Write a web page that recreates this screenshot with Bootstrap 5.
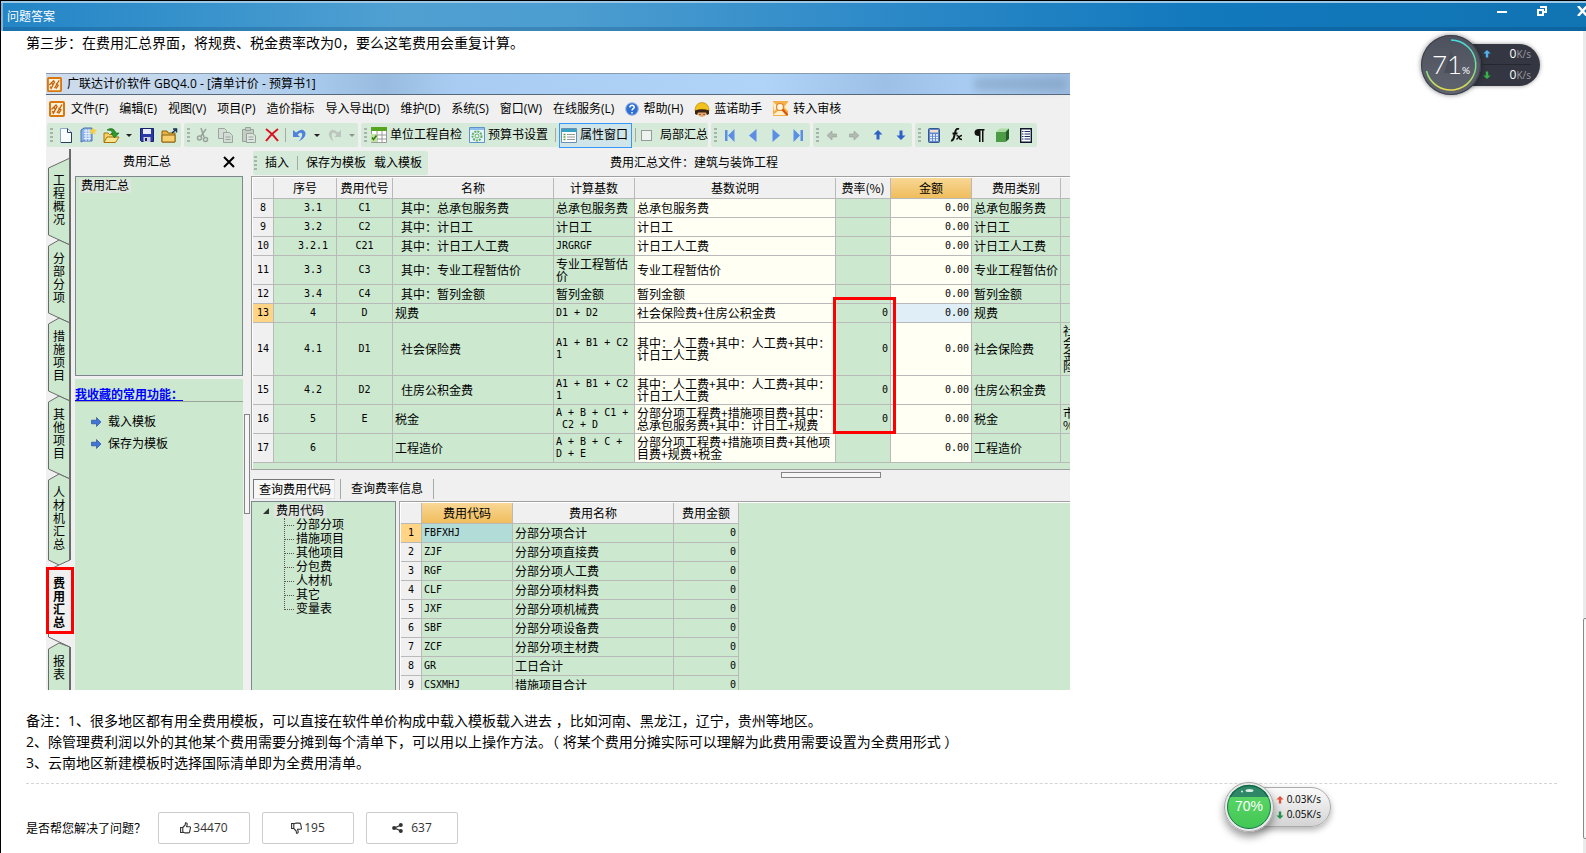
<!DOCTYPE html>
<html lang="zh-CN">
<head>
<meta charset="utf-8">
<meta name="viewport" content="width=device-width, initial-scale=1">
<title>问题答案</title>
<link href="https://cdn.jsdelivr.net/npm/bootstrap@5.3.0/dist/css/bootstrap.min.css" rel="stylesheet">
<style>
  :root { --ui: "Open Sans", "Noto Sans CJK SC", sans-serif; --grid: "DejaVu Sans Mono", "Noto Sans CJK SC", monospace; --green: #cce8cf; --face: #f0f0f0; --line: #b9b9b9; }
  body { font-family: var(--ui); font-size: 14px; line-height: 21px; color: #000; background: #fff; border-left: 1px solid #000; min-height: 100vh; overflow-x: hidden; }
  svg { display: block; flex: none; }
  .plain { border: 0; background: none; padding: 0; color: inherit; font: inherit; white-space: nowrap; }

  .winbar { height: 31px; border-top: 1px solid #000; background: linear-gradient(90deg, #2385c6 0, #3e96cd 16%, #50a0d2 25%, #4c9dd0 36%, #2e8ac8 55%, #1279bd 76%, #1174b3 100%); box-shadow: inset 0 2px 0 #9cc8e6, inset 2px 0 0 #7fb8de, inset 0 -4px 0 rgba(0,50,95,.22); color: #fff; font-size: 12px; padding-left: 6px; }
  .winbar h1 { font-size: 12px; line-height: 31px; font-weight: 400; }
  .winbtns { gap: 30px; margin-right: -2px; padding-top: 5px; }

  .doc { padding: 1px 29px 9px 25px; }
  .shot { max-width: 1024px; max-height: 617px; margin: 20px 0 20px 20px; background: var(--face); font-size: 12px; line-height: 12px; }
  .shot-title { height: 22px; border-bottom: 1px solid #56697c; border-top: 1px solid #8a9bad; background: linear-gradient(90deg, #cfdcec 0, #b9d3ee 20%, #a6c8ea 27%, #98bbdf 33%, #a9cdf2 40%, #b0d4f8 70%, #9dc1e6 82%, #a9cdf2 90%, #9bbce0 100%); padding-left: 1px; gap: 5px; }
  .smudge { width: 92px; height: 12px; background: #6d89a8; opacity: .4; filter: blur(4px); margin-right: 4px; }
  .menus { height: 28px; padding-left: 3px; gap: 11px; }
  .menus .ico { gap: 6px; }
  .menus button.ico { gap: 4px; }
  .tools { height: 25px; padding: 0 0 1px 1px; gap: 3px; }
  .tgroup { background: #d6ead9; border-radius: 2px; height: 24px; padding-left: 3px; }
  .grip { width: 3px; height: 15px; margin-right: 1px; background: repeating-linear-gradient(#a6b3a8 0 2px, transparent 2px 4px); flex: none; }
  .slot { width: 23px; height: 23px; display: flex; align-items: center; justify-content: center; }
  .caret { width: 12px; display: flex; justify-content: center; }
  .caret::after { content: ""; border: 3px solid transparent; border-top-color: #222; border-bottom: 0; }
  .caret.off::after { border-top-color: #8d958e; }
  .vsep { width: 1px; height: 14px; background: #a3aaa4; flex: none; }
  .slot + .vsep { margin: 0 2px; }
  .checks, .checks button { gap: 3px; }
  .checks label { gap: 8px; }
  .checks input[type=checkbox] { width: 11px; height: 11px; margin: 0 0 0 2px; appearance: none; border: 1px solid #999; background: #edf3ee; }
  .pressed { border: 1px solid #3399ff; background: #cfe5ea; height: 25px; padding: 0 3px 0 1px; }

  .side { width: 25px; flex: none; }
  .side > svg { position: absolute; left: 0; top: 0; }
  .rail { padding: 13px 0 0 1px; }
  .rail button { height: 78px; width: 24px; display: flex; align-items: center; justify-content: center; line-height: 13px; }
  .rail button span { width: 12px; white-space: normal; word-break: break-all; }
  .rail .five { height: 90px; } .rail .on { height: 80px; font-weight: 700; } .rail .two { height: 50px; }
  .mark-red { position: absolute; border: 3px solid #f00; z-index: 3; pointer-events: none; }
  .mark-tab { left: 0; top: 419px; width: 28px; height: 67px; }
  .panel { width: 180px; flex: none; padding: 0 8px 0 4px; }
  .panel-head { height: 28px; padding: 0 8px 0 48px; }
  .tree-top { height: 200px; border: 1px solid #7f868f; background: var(--green); padding: 2px 0 0 3px; }
  .tree-top span { background: #dfe6e0; padding: 0 2px; line-height: 14px; border-radius: 2px; }
  .favs { background: var(--green); margin-top: 3px; }
  .favs h2 { font-size: 12px; line-height: 12px; font-weight: 700; color: #00f; text-decoration: underline; border-bottom: 1px solid #9aa39b; padding: 10px 0 0; height: 23px; margin: 0 0 9px; }
  .favs a { color: #000; text-decoration: none; gap: 7px; height: 22px; padding-left: 16px; }
  .thumb-v { position: absolute; left: 173px; top: 266px; width: 6px; height: 100px; border: 1px solid #858585; background: #f6f6f6; }

  .subbar { height: 28px; padding: 2px 0 0 2px; }
  .subbar .tgroup { gap: 8px; padding: 0 6px 0 1px; }
  .subbar .grip { margin: 0; }
  .subbar strong { font-weight: 400; margin-left: 182px; }
  .gridbox { border: 1px solid #a0a0a0; border-right: 0; box-shadow: inset 1px 1px 0 #fff; background: var(--green); padding: 1px 0 6px 1px; overflow: hidden; }
  table.sheet { table-layout: fixed; border-collapse: separate; border-spacing: 0; font-family: "Noto Sans CJK SC", sans-serif; font-size: 12px; line-height: 12px; }
  .sheet-main { width: 822px; } .sheet-codes { width: 338px; }
  .sheet th, .sheet td { border-right: 1px solid var(--line); border-bottom: 1px solid var(--line); padding: 0 2px; height: 19px; overflow: hidden; white-space: nowrap; vertical-align: middle; font-weight: 400; }
  .sheet thead th { height: 21px; background: var(--face); text-align: center; }
  .sheet tbody th { background: var(--face); text-align: center; padding: 0; }
  .sheet .m, .sheet tbody th { font-family: var(--grid); font-size: 10px; }
  .sheet .h2r td { height: 29px; } .sheet .h4r td { height: 53px; }
  .sheet .c { text-align: center; } .sheet .r { text-align: right; }
  .sheet .sq { text-align: center; padding-left: 18px; }
  .sheet .in { padding-left: 8px; }
  .sheet .y { background: #fffff4; }
  .sheet thead th.hot { background: linear-gradient(#f9d795, #efbd5c); }
  .sheet tbody th.hot { background: #ffd485; }
  .sheet .cell-on { background: #dfeef7; }
  .sheet .code-on { background: #b2dcd8; }
  .mark-rate { left: 582px; top: 149px; width: 63px; height: 137px; }
  .tabs2 { height: 31px; padding: 9px 0 0 2px; gap: 10px; }
  .tabs2 button { height: 20px; }
  .tabs2 .cur { border: 1px solid #e2e2e2; border-top: 1px solid #777; border-left: 1px solid #777; background: #f7f7f7; padding: 2px 3px 0 5px; margin-right: -5px; }
  .tabs2 .vsep { height: 20px; }
  .thumb-h { position: absolute; left: 530px; top: 2px; width: 100px; height: 6px; border: 1px solid #858585; background: #f6f6f6; }
  .codes { width: 145px; flex: none; border: 1px solid #808791; border-bottom: 0; background: var(--green); padding: 2px 0 0 11px; }
  .codes ul { margin: 0 0 0 21px; padding: 0; list-style: none; border-left: 1px dotted #555; height: 92px; }
  .codes li { height: 14px; line-height: 14px; display: flex; align-items: center; gap: 2px; }
  .codes li::before { content: ""; width: 9px; border-top: 1px dotted #555; }
  .codes .root { height: 14px; gap: 5px; }
  .codes .root span { background: #dfe6e0; border-radius: 2px; padding: 0 2px; line-height: 14px; }
  .codebox { margin-left: 3px; height: 200px; }

  .rule { border-top: 1px dashed #d5d5d5; margin-top: 10px; padding-top: 28px; font-size: 12px; gap: 12px; }
  .vote { width: 92px; height: 32px; border: 1px solid #ccc; border-radius: 2px; background: #fff; color: #333; font-size: 12px; line-height: 12px; padding: 0; display: flex; align-items: center; justify-content: center; gap: 2px; }
  .scroller { position: absolute; right: 0; top: 31px; bottom: 0; width: 3px; background: #ebebeb; }
  .scroller i { position: absolute; top: 587px; left: 0; width: 8px; height: 221px; border: 1px solid #888; background: #f7f7f7; border-radius: 2px; }

  .gauge { position: absolute; }
  .g-dark { right: 46px; top: 35px; }
  .g-dark .pill { width: 77px; height: 42px; margin-left: -18px; border-radius: 0 21px 21px 0; background: #343741; color: #fff; padding: 0 9px 0 20px; box-shadow: 0 0 4px rgba(0,0,0,.4); font-size: 12px; line-height: 20px; }
  .g-dark .pill div + div { border-top: 1px solid #262830; }
  .g-dark .pill small { color: #9a9ca3; font-size: 10px; }
  .disc { width: 60px; height: 60px; border-radius: 50%; background: linear-gradient(#4d515d, #60646f); box-shadow: 0 0 5px rgba(0,0,0,.5), inset 0 0 0 1px #3c3f49; color: #fff; z-index: 1; display: flex; align-items: baseline; justify-content: center; padding: 0; line-height: 58px; font-family: Lato, sans-serif; font-weight: 300; font-size: 26px; }
  .disc small { font-size: 10px; font-weight: 400; }
  .disc svg, .ball svg { position: absolute; left: 0; top: 0; z-index: -1; }
  .g-light { right: 255px; top: 782px; }
  .g-light .pill { width: 81px; height: 40px; margin-left: -24px; border: 1px solid #aaa; border-radius: 0 20px 20px 0; background: linear-gradient(#fafafa, #d4d4d4); box-shadow: 0 3px 6px rgba(0,0,0,.3); padding: 4px 9px 0 25px; font-size: 10px; line-height: 15px; }
  .ball { width: 50px; height: 50px; border-radius: 50%; box-shadow: 0 5px 8px rgba(0,0,0,.4); color: #fff; font: 14px/48px "Liberation Sans", sans-serif; text-align: center; z-index: 1; }
</style>
</head>
<body class="position-relative">

<svg width="0" height="0" class="position-absolute" aria-hidden="true">
  <symbol id="app" viewBox="0 0 16 16"><rect x="1" y="1" width="14" height="14" rx="1" fill="#fdf0d8" stroke="#d9780f" stroke-width="2"/><path d="M2.500 8.500L7 4l1 1.500L4 13M5 6.500l1.500 2M8 12l5-8.500M9.500 7l2.500 2-2.500 3.500M3 10.500l2 1" fill="none" stroke="#c4630c" stroke-width="1.400"/></symbol>
  <symbol id="up" viewBox="0 0 10 10"><path d="M5 0l4.500 4.500H6.500V9.500h-3V4.500H.5z"/></symbol>
  <symbol id="right" viewBox="0 0 10 10"><path d="M10 5L5.500 9.500V6.800H.5V3.200H5.500V.5z"/></symbol>
</svg>

<header class="winbar d-flex justify-content-between">
  <h1 class="m-0">问题答案</h1>
  <div class="winbtns d-flex align-items-start">
    <button class="plain" aria-label="最小化"><svg width="10" height="10"><path d="M0 5h10v2H0z" fill="#fff"/></svg></button>
    <button class="plain" aria-label="还原"><svg width="10" height="10"><path d="M3 1h6v5H7M1 4h5v5H1z" fill="none" stroke="#fff" stroke-width="2"/></svg></button>
    <button class="plain" aria-label="关闭"><svg width="11" height="10"><path d="M1 0l9 10M10 0L1 10" stroke="#fff" stroke-width="2.400"/></svg></button>
  </div>
</header>

<main class="doc">
  <p class="m-0">第三步：在费用汇总界面，将规费、税金费率改为0，要么这笔费用会重复计算。</p>

  <section class="shot d-flex flex-column overflow-hidden">
    <div class="shot-title d-flex align-items-center flex-shrink-0">
      <svg width="15" height="15"><use href="#app"/></svg><span class="flex-grow-1">广联达计价软件 GBQ4.0 - [清单计价 - 预算书1]</span><span class="smudge"></span>
    </div>
    <nav class="menus d-flex align-items-center flex-shrink-0">
      <span class="ico d-flex align-items-center"><svg width="16" height="16"><use href="#app"/></svg><button class="plain">文件(F)</button></span>
      <button class="plain">编辑(E)</button><button class="plain">视图(V)</button><button class="plain">项目(P)</button><button class="plain">造价指标</button><button class="plain">导入导出(D)</button><button class="plain">维护(D)</button><button class="plain">系统(S)</button><button class="plain">窗口(W)</button><button class="plain">在线服务(L)</button>
      <button class="plain ico d-flex align-items-center"><svg width="14" height="14" viewBox="0 0 14 14"><circle cx="7" cy="7" r="6.300" fill="#2f6fd0" stroke="#9db8e0"/><path d="M4.800 5.500C4.800 2.500 9.400 2.800 9.200 5.300 9 6.800 7 6.700 7 8.600M7 10v1.500" fill="none" stroke="#fff" stroke-width="1.500"/></svg>帮助(H)</button>
      <button class="plain ico d-flex align-items-center"><svg width="16" height="15" viewBox="0 0 16 15"><path d="M3 8h10v4q-2 3-5 3t-5-3z" fill="#e9a66b"/><path d="M1 9Q1 1 8 .5 15 1 15 9q-7-3-14 0z" fill="#f2c21b" stroke="#b98207" stroke-width=".7"/><path d="M1 8.500q7-2.500 14 0V12l-2 1-1-2.500H4L3 13l-2-1z" fill="#3a2413"/><path d="M6 12v1M10 12v1" stroke="#222"/></svg>蓝诺助手</button>
      <button class="plain ico d-flex align-items-center"><svg width="16" height="16" viewBox="0 0 16 16"><path d="M0 0h15v15H0z" fill="#f4b04a"/><path d="M0 1l6 5-5 4zM15 1l-4 5 4 4zM0 14l5-4h4l4 4z" fill="#fff0cf"/><circle cx="7" cy="6" r="3.500" fill="#fff5e0" stroke="#e2872a" stroke-width="1.200"/><path d="M9.500 8.500l5 5.500" stroke="#d4520c" stroke-width="2"/></svg>转入审核</button>
    </nav>

    <div class="tools d-flex align-items-center flex-shrink-0">
      <div class="tgroup d-flex align-items-center"><i class="grip"></i>
        <button class="plain slot" aria-label="新建"><svg width="12" height="15" viewBox="0 0 12 15"><path d="M.5.5h7l4 4v10H.5z" fill="#fbfdff" stroke="#8ba6ca"/><path d="M7.500.5v4h4M11.500 4.500v10H1" fill="none" stroke="#24405f"/></svg></button>
        <button class="plain slot" aria-label="新建预算"><svg width="17" height="16" viewBox="0 0 17 16"><path d="M1 3l3-2h8v13H3l-2 1z" fill="#8cb2e8" stroke="#4670b2"/><path d="M4 4h7M4 6.500h7M4 9h7M4 11.500h7M6 2v12M9 2v12" stroke="#e9f2ff"/><path d="M13 0l1 2.500L17 3l-2 1.500.6 3L13 6l-2.600 1.500.6-3L9 3l3-.5z" fill="#f8cf3c"/></svg></button>
        <button class="plain slot" aria-label="打开"><svg width="17" height="17" viewBox="0 0 17 17"><path d="M1 15V6h4l1.500 1.500H12V10" fill="#f7d262" stroke="#a37410"/><path d="M1 15.500L4 10h12l-3.500 5.500z" fill="#fbe48b" stroke="#a37410"/><path d="M4 3Q10-1 13 6h3l-4.500 5L8 6h2Q9 3 4 3z" fill="#2d9a2d" stroke="#126312" stroke-width=".6"/></svg></button><span class="caret"></span>
        <button class="plain slot" aria-label="保存"><svg width="14" height="14" viewBox="0 0 14 14"><path d="M.5.5h13v13h-12l-1-1z" fill="#2b39a8" stroke="#17216c"/><path d="M3 1h8v5H3z" fill="#e8ecff"/><path d="M3.500 9h7v5h-7z" fill="#cdd0dc"/><path d="M5 10h2v3H5z" fill="#17216c"/></svg></button>
        <button class="plain slot" aria-label="目录"><svg width="17" height="15" viewBox="0 0 17 15"><path d="M1 14V3h5l1 2h7v9z" fill="#eab53f" stroke="#8d6310"/><path d="M1 14V7h13v7z" fill="#f7cf6c" stroke="#8d6310"/><path d="M11 5l4-3.500M12 1h3.500v3.500" fill="none" stroke="#1c3154" stroke-width="1.500"/></svg></button>
      </div>
      <div class="tgroup d-flex align-items-center"><i class="grip"></i>
        <button class="plain slot" aria-label="剪切"><svg width="14" height="16" viewBox="0 0 14 16" fill="none" stroke="#98a29a" stroke-width="1.500"><path d="M5 1l3 9M10 2L5 9"/><circle cx="3.500" cy="11" r="2"/><circle cx="9.500" cy="12.500" r="2"/></svg></button>
        <button class="plain slot" aria-label="复制"><svg width="15" height="15" viewBox="0 0 15 15" fill="#d3dcd5" stroke="#9aa59c"><path d="M.5.5h6l2 2v8h-8z"/><path d="M5.500 4.500h6l3 3v7h-9z"/><path d="M7.500 9h5M7.500 11.500h5"/></svg></button>
        <button class="plain slot" aria-label="粘贴"><svg width="14" height="16" viewBox="0 0 14 16" fill="#c4cec6" stroke="#98a29a"><path d="M.5 2.500h11v12H.5z"/><path d="M3.500.5h5v3h-5z"/><path d="M4.500 6.500h6l3 2v7h-9z" fill="#dde5df"/><path d="M6.500 10h5M6.500 12.500h5"/></svg></button>
        <button class="plain slot" aria-label="删除"><svg width="14" height="14" viewBox="0 0 14 14"><path d="M1 1q7 5 12 12M13 1Q6 6 1 13" fill="none" stroke="#d9121f" stroke-width="2"/></svg></button>
        <i class="vsep"></i>
        <button class="plain slot" aria-label="撤销"><svg width="13" height="14" viewBox="0 0 13 14"><path d="M0 2v7h7L4.700 6.800Q7 3.500 9 5.500q1 3-3.500 8Q13 10 12.500 5 10-1 3 4.500z" fill="#4f82dc"/></svg></button><span class="caret"></span>
        <button class="plain slot" aria-label="重做"><svg width="13" height="14" viewBox="0 0 13 14"><path d="M13 2v7H6.500l2-2.200Q6 3.500 4 5.500q-1 3 1.500 8Q0 9 1 5q2.500-6 9-.5z" fill="#bcc6be"/></svg></button><span class="caret off"></span>
      </div>
      <div class="tgroup checks d-flex align-items-center"><i class="grip"></i>
        <button class="plain d-flex align-items-center"><svg width="16" height="16" viewBox="0 0 16 16"><path d="M.5.5h15v15H.5z" fill="#fff" stroke="#9a9a9a"/><path d="M6 4v12M11 4v12M0 8h16M0 12h16" stroke="#9a9a9a"/><path d="M0 0h16v4H0z" fill="#57a51f"/><path d="M0 7h6v8H0z" fill="#bfe39a"/><path d="M1 10.500l1.500 2 3-4" fill="none" stroke="#2c7a10" stroke-width="1.500"/></svg>单位工程自检</button>
        <button class="plain d-flex align-items-center ps-1"><svg width="16" height="16" viewBox="0 0 16 16"><path d="M.5.5h15v15H.5z" fill="#e6f3ff" stroke="#5d93c9"/><path d="M1 1h14v2H1z" fill="#8fc0ec"/><circle cx="8" cy="9" r="4.500" fill="none" stroke="#62ae5c" stroke-width="2" stroke-dasharray="2 1"/><circle cx="8" cy="9" r="2" fill="none" stroke="#62ae5c"/></svg>预算书设置</button>
        <i class="vsep ms-1"></i>
        <button class="plain pressed d-flex align-items-center"><svg width="16" height="15" viewBox="0 0 16 15"><path d="M.5.5h15v14H.5z" fill="#fff" stroke="#6c8fae"/><path d="M1 1h14v3H1z" fill="#35a3c6"/><path d="M2.500 6.500h2M2.500 9h2M2.500 11.500h2" stroke="#55a045" stroke-width="1.500"/><path d="M6 6.500h8M6 9h8M6 11.500h8" stroke="#999"/></svg>属性窗口</button>
        <i class="vsep"></i>
        <label class="d-flex align-items-center"><input type="checkbox">局部汇总</label>
      </div>
      <div class="tgroup d-flex align-items-center"><i class="grip"></i>
        <button class="plain slot" aria-label="第一条"><svg width="11" height="13" fill="#5b8fe6"><path d="M1 1h2.500v11H1zM10.500 0v13L4 6.500z"/></svg></button>
        <button class="plain slot" aria-label="上一条"><svg width="8" height="13" fill="#5b8fe6"><path d="M7.500 0v13L0 6.500z"/></svg></button>
        <button class="plain slot" aria-label="下一条"><svg width="8" height="13" fill="#5b8fe6"><path d="M.5 0v13L8 6.500z"/></svg></button>
        <button class="plain slot" aria-label="最后一条"><svg width="11" height="13" fill="#5b8fe6"><path d="M7.500 1H10v11H7.500zM.5 0v13L7 6.500z"/></svg></button>
      </div>
      <div class="tgroup d-flex align-items-center"><i class="grip"></i>
        <button class="plain slot" aria-label="左移"><svg width="11" height="11" fill="#b1bab3" stroke="#949e96" stroke-width=".6"><path d="M1 5.500L6 1v3h4.500v3H6v3z"/></svg></button>
        <button class="plain slot" aria-label="右移"><svg width="11" height="11" fill="#b1bab3" stroke="#949e96" stroke-width=".6"><path d="M10 5.500L5 1v3H.5v3H5v3z"/></svg></button>
        <button class="plain slot" aria-label="上移"><svg width="10" height="10" fill="#2f62c8"><use href="#up"/></svg></button>
        <button class="plain slot" aria-label="下移"><svg width="10" height="10" fill="#2f62c8"><path d="M5 10L.5 5.500h3V.5h3v5h3z"/></svg></button>
      </div>
      <div class="tgroup d-flex align-items-center"><i class="grip"></i>
        <button class="plain slot" aria-label="计算器"><svg width="12" height="15" viewBox="0 0 12 15"><rect x=".5" y=".5" width="11" height="14" rx="1" fill="#5f87cc" stroke="#35558f"/><path d="M2 2h8v2.500H2z" fill="#f3dcc8"/><path d="M2 7h8M2 9.500h8M2 12h8" stroke="#fff" stroke-width="1.500" stroke-dasharray="2 1"/></svg></button>
        <button class="plain slot" aria-label="函数"><svg width="13" height="14" viewBox="0 0 13 14" fill="none" stroke="#111"><path d="M1 12.500q2 .5 3-3.500l1.500-6Q6.500 0 9 1M2.500 5.500h5" stroke-width="2"/><path d="M6.500 7.500q2 0 2.500 2t3 2M12 7.500q-2 0-5.500 4" stroke-width="1.400"/></svg></button>
        <button class="plain slot" aria-label="段落"><svg width="11" height="13" viewBox="0 0 11 13"><path d="M10.500 0v1.500H9.500V13H8V1.500H6.500V13H5V7Q.5 7 .5 3.500T5 0z" fill="#111"/></svg></button>
        <button class="plain slot" aria-label="立方体"><svg width="15" height="15" viewBox="0 0 15 15"><path d="M1 4l4-3.500h9L10.500 4z" fill="#a9dba2"/><path d="M1 4h9.500v10H1z" fill="#4c9c46"/><path d="M10.500 4L14 .5V11l-3.500 3z" fill="#1f5f22"/></svg></button>
        <button class="plain slot" aria-label="列表"><svg width="12" height="15" viewBox="0 0 12 15"><path d="M.7.7h10.600v13.600H.7z" fill="#fff" stroke="#10162e" stroke-width="1.400"/><path d="M2 3.500h1.500M2 6h1.500M2 8.500h1.500M2 11h1.500M4.500 3.500H10M4.500 6H10M4.500 8.500H10M4.500 11H10" stroke="#1b2c6b" stroke-width="1.200"/></svg></button>
      </div>
    </div>

    <div class="d-flex flex-grow-1 overflow-hidden position-relative">
      <div class="side position-relative">
        <svg width="25" height="542" viewBox="0 0 25 542" stroke="#6b6b6b">
          <g fill="#cce8cf">
            <path d="M24 10L2.500 20V87L24 97z"/><path d="M24 97L13 92 2.500 98V165L24 175z"/><path d="M24 175L13 170 2.500 176V243L24 253z"/><path d="M24 253L13 248 2.500 254V321L24 331z"/><path d="M24 331L13 326 2.500 332V412L13 417 24 412z"/>
            <path d="M24 499L13 495 2.500 501V545H24z"/>
          </g>
          <path d="M13 417L2.500 422V489L24 499" fill="#f0f0f0"/>
          <path d="M24 1V412M24 499V542" stroke-width="2" fill="none"/>
        </svg>
        <nav class="rail position-relative">
          <button class="plain"><span>工程概况</span></button><button class="plain"><span>分部分项</span></button><button class="plain"><span>措施项目</span></button><button class="plain"><span>其他项目</span></button><button class="plain five"><span>人材机汇总</span></button><button class="plain on"><span>费用汇总</span></button><button class="plain two"><span>报表</span></button>
        </nav>
        <div class="mark-red mark-tab"></div>
      </div>

      <aside class="panel d-flex flex-column position-relative">
        <div class="panel-head d-flex align-items-center justify-content-between flex-shrink-0"><span>费用汇总</span><button class="plain" aria-label="关闭面板"><svg width="12" height="12"><path d="M1 1l10 10M11 1L1 11" stroke="#000" stroke-width="2"/></svg></button></div>
        <div class="tree-top flex-shrink-0"><span class="d-inline-block">费用汇总</span></div>
        <div class="favs flex-grow-1">
          <h2>我收藏的常用功能：</h2>
          <a href="#" class="d-flex align-items-center"><svg width="10" height="10" fill="#3f74d8" stroke="#1e3f8a" stroke-width=".6"><use href="#right"/></svg>载入模板</a>
          <a href="#" class="d-flex align-items-center"><svg width="10" height="10" fill="#3f74d8" stroke="#1e3f8a" stroke-width=".6"><use href="#right"/></svg>保存为模板</a>
        </div>
        <i class="thumb-v"></i>
      </aside>

      <div class="flex-grow-1 overflow-hidden d-flex flex-column position-relative">
        <div class="subbar d-flex align-items-center flex-shrink-0">
          <div class="tgroup d-flex align-items-center"><i class="grip"></i><button class="plain">插入</button><i class="vsep"></i><button class="plain">保存为模板</button><button class="plain">载入模板</button></div>
          <strong>费用汇总文件：建筑与装饰工程</strong>
        </div>
        <div class="gridbox flex-shrink-0">
          <table class="sheet sheet-main">
            <colgroup><col style="width:21px"><col style="width:63px"><col style="width:56px"><col style="width:161px"><col style="width:81px"><col style="width:201px"><col style="width:55px"><col style="width:81px"><col style="width:89px"><col style="width:14px"></colgroup>
            <thead><tr><th></th><th>序号</th><th>费用代号</th><th>名称</th><th>计算基数</th><th>基数说明</th><th>费率(%)</th><th class="hot">金额</th><th>费用类别</th><th></th></tr></thead>
            <tbody>
              <tr><th>8</th><td class="m sq">3.1</td><td class="m c">C1</td><td class="in">其中：总承包服务费</td><td>总承包服务费</td><td class="y">总承包服务费</td><td></td><td class="m r y">0.00</td><td>总承包服务费</td><td></td></tr>
              <tr><th>9</th><td class="m sq">3.2</td><td class="m c">C2</td><td class="in">其中：计日工</td><td>计日工</td><td class="y">计日工</td><td></td><td class="m r y">0.00</td><td>计日工</td><td></td></tr>
              <tr><th>10</th><td class="m sq">3.2.1</td><td class="m c">C21</td><td class="in">其中：计日工人工费</td><td class="m">JRGRGF</td><td class="y">计日工人工费</td><td></td><td class="m r y">0.00</td><td>计日工人工费</td><td></td></tr>
              <tr class="h2r"><th>11</th><td class="m sq">3.3</td><td class="m c">C3</td><td class="in">其中：专业工程暂估价</td><td>专业工程暂估<br>价</td><td class="y">专业工程暂估价</td><td></td><td class="m r y">0.00</td><td>专业工程暂估价</td><td></td></tr>
              <tr><th>12</th><td class="m sq">3.4</td><td class="m c">C4</td><td class="in">其中：暂列金额</td><td>暂列金额</td><td class="y">暂列金额</td><td></td><td class="m r y">0.00</td><td>暂列金额</td><td></td></tr>
              <tr><th class="hot">13</th><td class="m sq">4</td><td class="m c">D</td><td>规费</td><td class="m">D1 + D2</td><td class="y">社会保险费+住房公积金费</td><td class="m r">0</td><td class="m r cell-on">0.00</td><td>规费</td><td></td></tr>
              <tr class="h4r"><th>14</th><td class="m sq">4.1</td><td class="m c">D1</td><td class="in">社会保险费</td><td class="m">A1 + B1 + C2<br>1</td><td class="y">其中：人工费+其中：人工费+其中：<br>计日工人工费</td><td class="m r">0</td><td class="m r y">0.00</td><td>社会保险费</td><td>社<br>会<br>金<br>险</td></tr>
              <tr class="h2r"><th>15</th><td class="m sq">4.2</td><td class="m c">D2</td><td class="in">住房公积金费</td><td class="m">A1 + B1 + C2<br>1</td><td class="y">其中：人工费+其中：人工费+其中：<br>计日工人工费</td><td class="m r">0</td><td class="m r y">0.00</td><td>住房公积金费</td><td></td></tr>
              <tr class="h2r"><th>16</th><td class="m sq">5</td><td class="m c">E</td><td>税金</td><td class="m">A + B + C1 +<br>&nbsp;C2 + D</td><td class="y">分部分项工程费+措施项目费+其中：<br>总承包服务费+其中：计日工+规费</td><td class="m r">0</td><td class="m r y">0.00</td><td>税金</td><td>市<br>%</td></tr>
              <tr class="h2r"><th>17</th><td class="m sq">6</td><td></td><td>工程造价</td><td class="m">A + B + C +<br>D + E</td><td class="y">分部分项工程费+措施项目费+其他项<br>目费+规费+税金</td><td></td><td class="m r y">0.00</td><td>工程造价</td><td></td></tr>
            </tbody>
          </table>
        </div>
        <div class="mark-red mark-rate"></div>
        <div class="tabs2 d-flex flex-shrink-0 position-relative">
          <button class="plain cur">查询费用代码</button><i class="vsep"></i><button class="plain">查询费率信息</button><i class="vsep"></i>
          <i class="thumb-h"></i>
        </div>
        <div class="d-flex flex-grow-1 overflow-hidden">
          <div class="codes">
            <div class="root d-flex align-items-center"><svg width="6" height="6"><path d="M6 0v6H0z" fill="#333"/></svg><span>费用代码</span></div>
            <ul><li>分部分项</li><li>措施项目</li><li>其他项目</li><li>分包费</li><li>人材机</li><li>其它</li><li>变量表</li></ul>
          </div>
          <div class="gridbox codebox flex-grow-1">
            <table class="sheet sheet-codes">
              <colgroup><col style="width:21px"><col style="width:91px"><col style="width:161px"><col style="width:65px"></colgroup>
              <thead><tr><th></th><th class="hot">费用代码</th><th>费用名称</th><th>费用金额</th></tr></thead>
              <tbody>
                <tr><th class="hot">1</th><td class="m code-on">FBFXHJ</td><td>分部分项合计</td><td class="m r">0</td></tr>
                <tr><th>2</th><td class="m">ZJF</td><td>分部分项直接费</td><td class="m r">0</td></tr>
                <tr><th>3</th><td class="m">RGF</td><td>分部分项人工费</td><td class="m r">0</td></tr>
                <tr><th>4</th><td class="m">CLF</td><td>分部分项材料费</td><td class="m r">0</td></tr>
                <tr><th>5</th><td class="m">JXF</td><td>分部分项机械费</td><td class="m r">0</td></tr>
                <tr><th>6</th><td class="m">SBF</td><td>分部分项设备费</td><td class="m r">0</td></tr>
                <tr><th>7</th><td class="m">ZCF</td><td>分部分项主材费</td><td class="m r">0</td></tr>
                <tr><th>8</th><td class="m">GR</td><td>工日合计</td><td class="m r">0</td></tr>
                <tr><th>9</th><td class="m">CSXMHJ</td><td>措施项目合计</td><td class="m r">0</td></tr>
              </tbody>
            </table>
          </div>
        </div>
      </div>
    </div>
  </section>

  <p class="m-0">备注：1、很多地区都有用全费用模板，可以直接在软件单价构成中载入模板载入进去 ，比如河南、黑龙江，辽宁，贵州等地区。<br>2、除管理费利润以外的其他某个费用需要分摊到每个清单下，可以用以上操作方法。（ 将某个费用分摊实际可以理解为此费用需要设置为全费用形式 ）<br>3、云南地区新建模板时选择国际清单即为全费用清单。</p>

  <div class="rule d-flex align-items-center">
    <span>是否帮您解决了问题？</span>
    <button class="vote"><svg width="11" height="12" viewBox="0 0 11 12" fill="none" stroke="#333" stroke-width="1.100"><path d="M.6 5.500h2.200v5H.6zM2.800 5.500L5.200 3 5.500.7q1.800 0 1.700 1.800l-.6 2.300h3.200q.9.300.6 1.300L9.600 10q-.3.900-1.300.9H5L2.800 10"/></svg>34470</button>
    <button class="vote"><svg width="11" height="12" viewBox="0 0 11 12" fill="none" stroke="#333" stroke-width="1.100"><path d="M.6 6.500h2.200v-5H.6zM2.800 6.500L5.200 9l.3 2.300q1.800 0 1.700-1.800L6.600 7.200h3.200q.9-.3.600-1.300L9.600 2Q9.300 1.100 8.300 1.100H5L2.800 2"/></svg>195</button>
    <button class="vote gap-2"><svg width="11" height="10" viewBox="0 0 11 10" fill="#333"><path d="M9 2L2.500 5 9 8" fill="none" stroke="#333" stroke-width="1.300"/><circle cx="2.200" cy="5" r="2.100"/><circle cx="8.800" cy="2" r="2"/><circle cx="8.800" cy="8" r="2"/></svg>637</button>
  </div>
</main>

<div class="scroller overflow-hidden"><i></i></div>

<div class="gauge g-dark d-flex align-items-center">
  <div class="disc position-relative">
    <svg width="60" height="60" viewBox="0 0 60 60"><defs><linearGradient id="arc" x1="0" y1="0" x2="0" y2="1"><stop offset="0" stop-color="#45dfe0"/><stop offset=".6" stop-color="#7de08a"/><stop offset="1" stop-color="#e9dd4a"/></linearGradient></defs><path d="M30 16l7 22H23z" fill="#4a4e59"/><path d="M30 5A25 25 0 1 1 5.500 36" fill="none" stroke="url(#arc)" stroke-width="1.500"/></svg>
    <span>71</span><small>%</small>
  </div>
  <div class="pill">
    <div class="d-flex align-items-center justify-content-between"><svg width="8" height="8" fill="#4db3f0"><use href="#up"/></svg><span>0<small>K/s</small></span></div>
    <div class="d-flex align-items-center justify-content-between"><svg width="8" height="8" viewBox="0 0 10 10" fill="#36b44a"><path d="M5 10L.5 5.500h3V.5h3v5h3z"/></svg><span>0<small>K/s</small></span></div>
  </div>
</div>

<div class="gauge g-light d-flex align-items-center">
  <div class="ball position-relative">
    <svg width="50" height="50" viewBox="0 0 50 50"><defs><linearGradient id="gr" x1="0" y1="0" x2="0" y2="1"><stop offset="0" stop-color="#5fd86a"/><stop offset="1" stop-color="#42c754"/></linearGradient></defs><circle cx="25" cy="25" r="24.500" fill="#e9e9e9" stroke="#a5a5a5"/><circle cx="25" cy="25" r="21.500" fill="url(#gr)" stroke="#12784f"/><path d="M6 15A21.500 21.500 0 0 1 44 15z" fill="#2f8767"/><path d="M6 15A21.500 21.500 0 0 1 44 15" fill="none" stroke="#0c6b47" stroke-width="1.500"/><ellipse cx="25.500" cy="8.500" rx="4" ry="1.500" fill="#d8efe5"/><circle cx="18" cy="9.500" r="1" fill="#d8efe5"/></svg>
    70%
  </div>
  <div class="pill">
    <div class="d-flex align-items-center justify-content-between"><svg width="8" height="8" fill="#e2523a"><use href="#up"/></svg><span>0.03K/s</span></div>
    <div class="d-flex align-items-center justify-content-between"><svg width="8" height="8" viewBox="0 0 10 10" fill="#229650"><path d="M5 10L.5 5.500h3V.5h3v5h3z"/></svg><span>0.05K/s</span></div>
  </div>
</div>

<script src="https://cdn.jsdelivr.net/npm/bootstrap@5.3.0/dist/js/bootstrap.bundle.min.js"></script>
</body>
</html>
